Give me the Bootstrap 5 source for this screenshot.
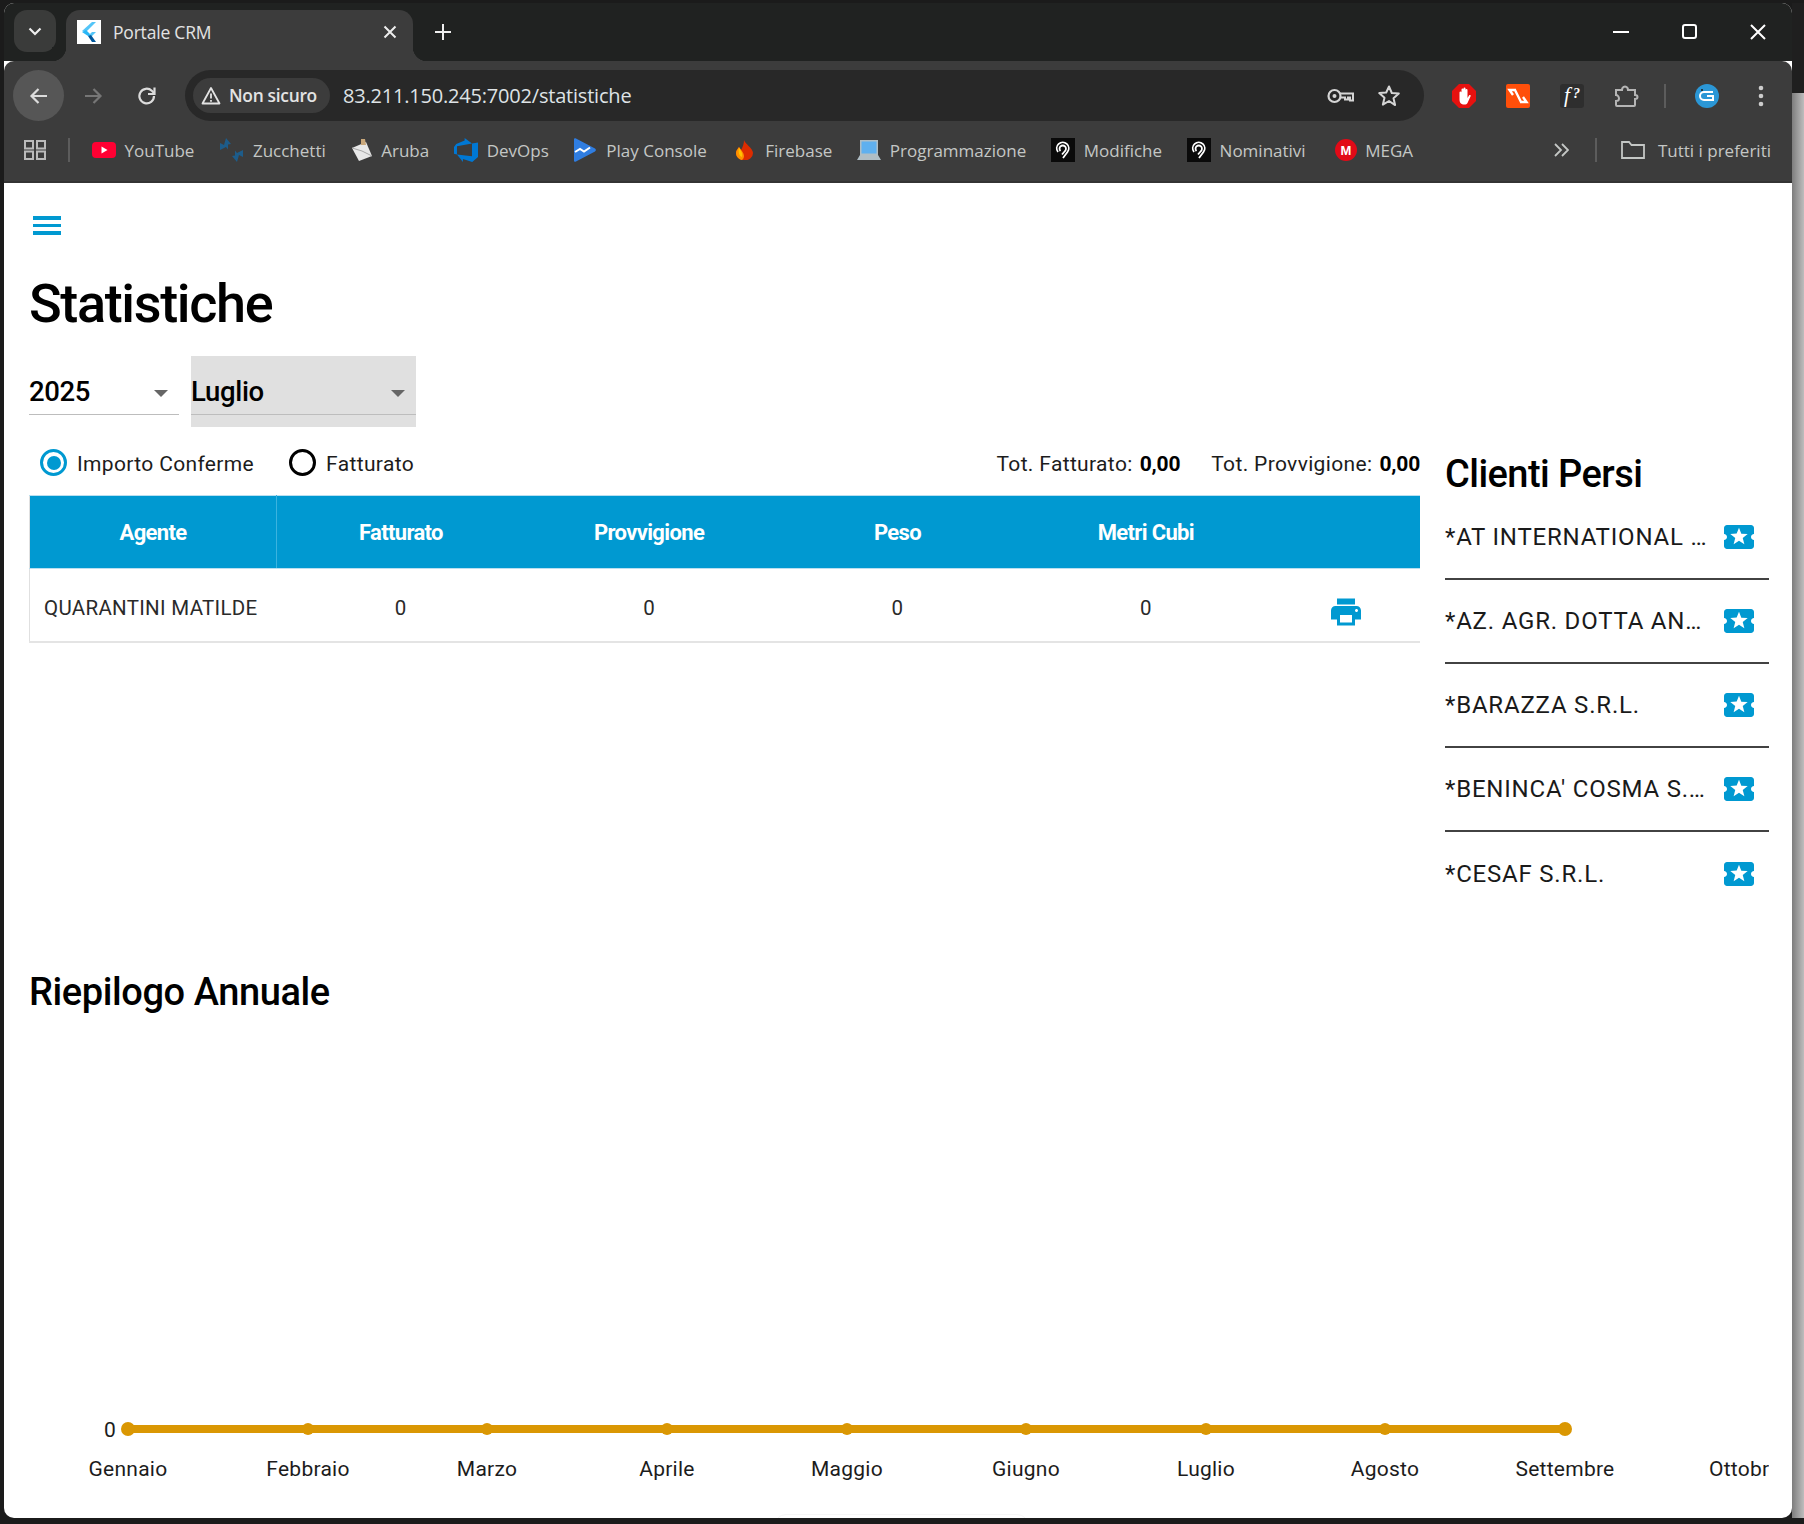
<!DOCTYPE html>
<html lang="it">
<head>
  <meta charset="UTF-8">
  <meta name="viewport" content="width=device-width, initial-scale=1.0">
  <title>Portale CRM</title>
  <link href="https://cdn.jsdelivr.net/npm/bootstrap@5.3.0/dist/css/bootstrap.min.css" rel="stylesheet">
  <style>
    html, body { height: 1524px; overflow: hidden; }
    body { background: #1b1b1b; font-family: Roboto, sans-serif; color: #000; }
    .desk { width: 1804px; height: 1524px; padding: 3px 0 0 4px; }
    .win { width: 1788px; height: 1515px; border-radius: 10px; overflow: hidden; background: #fff; flex: none; }
    .side-strip { width: 12px; height: 1515px; }
    .side-top { height: 90px; background: #1f1f1f; }
    .side-low { height: 1425px; background: linear-gradient(90deg, #7d7d7d, #bdbdbd); }

    /* chrome */
    .titlebar { height: 58px; background: #202221; padding: 7px 0 0 10px; color: #fff; }
    .tab-list { width: 42px; height: 42px; border-radius: 13px; background: #3a3b3a; }
    .tabx { width: 347px; height: 51px; margin-left: 10px; background: #3c3c3c; border-radius: 14px 14px 0 0; padding: 0 16px 7px 11px; }
    .tabx::before, .tabx::after { content: ""; position: absolute; bottom: 0; width: 14px; height: 14px; }
    .tabx::before { left: -14px; background: radial-gradient(circle at 0 0, #202221 14px, #3c3c3c 14.5px); }
    .tabx::after { right: -14px; background: radial-gradient(circle at 100% 0, #202221 14px, #3c3c3c 14.5px); }
    .tab-ico { width: 24px; height: 24px; background: #fff; }
    .tab-name { font: 17.5px "Open Sans", sans-serif; color: #e3e3e3; margin-left: 12px; letter-spacing: -.2px; }
    .tab-plus { margin-left: 22px; margin-bottom: 8px; }
    .win-ctrl { gap: 53px; margin-right: 26px; margin-bottom: 8px; }

    .toolbar { height: 60px; background: #3c3c3c; padding: 9px 0 0 9px; border-radius: 10px 10px 0 0; margin-top: 0; }
    .nav-round { width: 51px; height: 51px; border-radius: 50%; }
    .nav-on { background: #565656; }
    .nav-gap { margin-right: 3px; }
    .omni { width: 1239px; height: 51px; border-radius: 26px; background: #282828; margin-left: 13px; padding: 0 0 0 8px; }
    .not-safe { width: 137px; height: 35px; border-radius: 18px; background: #3c3c3c; padding-left: 8px; color: #e3e3e3; font: 600 17.4px "Open Sans", sans-serif; letter-spacing: -.3px; gap: 8px; }
    .not-safe span { padding-bottom: 2px; }
    .url-txt { margin-left: 13px; font: 20px "Open Sans", sans-serif; color: #dfe3e6; letter-spacing: -.2px; }
    .omni-end { gap: 23px; margin-right: 23px; }
    .ext-row { margin-left: 28px; gap: 30px; }
    .ext-sep { width: 2px; height: 24px; background: #5c5c5c; margin: 0 -1px 0 -5px; }
    .ext-more { margin-left: 9px; }

    .bookbar { height: 62px; background: #3c3c3c; padding: 0 0 2px 20px; border-bottom: 2px solid #333; font: 17px "Open Sans", sans-serif; color: #c4c7c5; }
    .book-sep { width: 2px; height: 24px; background: #5c5c5c; margin: 0 22px; }
    .book-sep-r { margin: 0 24px 0 26px; }
    .book-item { gap: 8.5px; margin-right: 25px; white-space: nowrap; }
    .book-all { gap: 13px; margin-right: 21px; white-space: nowrap; }

    /* page */
    .page { height: 1335px; padding: 0 23px 0 25px; position: relative; }
    .burger { width: 28px; padding-top: 33px; height: 51px; margin-left: 4px; }
    .burger span { display: block; height: 3.5px; background: #0099d1; margin-bottom: 4px; }
    .page-title { font: 500 54px/60px Roboto, sans-serif; letter-spacing: -1.35px; margin: 40px 0 0 0; height: 60px; }
    .pick-row { margin-top: 22px; gap: 12px; }
    .pick { height: 71px; position: relative; font-size: 27.5px; font-weight: 500; letter-spacing: -.35px; }
    .pick-year { width: 150px; }
    .pick-month { width: 225px; background: #e0e0e0; }
    .pick-line { position: absolute; left: 0; right: 0; bottom: 12px; height: 1.5px; background: #bdbdbd; }
    .pick-val { line-height: 71px; height: 70px; display: block; }
    .pick-arrow { position: absolute; right: 11px; top: 34px; width: 0; height: 0; border-left: 7.5px solid transparent; border-right: 7.5px solid transparent; border-top: 7.5px solid #666; }

    .left-col { width: 1391px; }
    .right-col { width: 324px; margin-left: 25px; }
    .radio-row { height: 68px; padding: 22px 0 0 11px; font-size: 21px; letter-spacing: .35px; color: #1c1c1c; }
    .dot-off, .dot-on { width: 27px; height: 27px; border-radius: 50%; border: 3.5px solid #000; display: block; flex: none; }
    .dot-on { border-color: #0099d1; position: relative; }
    .dot-on::after { content: ""; position: absolute; inset: 3.5px; border-radius: 50%; background: #0099d1; }
    .radio-lbl { margin-left: 10px; margin-right: 35px; }
    .totals { margin-left: auto; gap: 31px; }
    .totals b { font-weight: 700; letter-spacing: -.2px; color: #000; margin-left: 1.5px; }

    .stats { width: 1391px; table-layout: fixed; margin: 0; border-left: 1px solid #e0e0e0; }
    .col-agent { width: 247px; }
    .col-act { width: 150px; }
    .stats th { height: 73px; background: #0099d1; color: #fff; font-size: 22px; font-weight: 700; letter-spacing: -.65px; text-align: center; vertical-align: middle; border: 0; border-top: 1px solid #b9dff0; border-bottom: 1px solid #b9dff0; padding: 0; box-shadow: none; }
    .stats td { height: 73px; padding: 7px 0 0; font-size: 20.5px; text-align: center; vertical-align: middle; color: #2a2a2a; border: 0; border-bottom: 2px solid #e4e4e4; letter-spacing: .3px; }
    .stats th:first-child { border-right: 1px solid #3bb3df; }
    .stats td:first-child { text-align: left; padding-left: 14px; }
    .print-ico { display: block; margin: 8px auto 0; position: relative; left: 1px; }

    .lost-title { font: 500 38px/46px Roboto, sans-serif; letter-spacing: -.55px; height: 69px; margin: 0; padding-top: 24px; }
    .lost-item { height: 84px; border-bottom: 2px solid #424242; font-size: 24px; letter-spacing: .8px; color: #1a1a1a; padding-right: 12px; white-space: nowrap; }
    .lost-item:last-child { border-bottom: 0; }

    .year-title { font: 500 38px/44px Roboto, sans-serif; letter-spacing: -.4px; margin: 0; }
    .year-wrap { position: absolute; left: 25px; top: 787px; right: 23px; }
    .chart-box { display: block; margin-top: 0; }
    .chart-box text { font-family: Roboto, sans-serif; font-size: 21px; letter-spacing: .25px; fill: #1c1c1c; }
    .faint-tab { position: absolute; left: 770px; width: 255px; bottom: -12px; height: 16px; border: 1px solid #f6f6f6; border-radius: 12px 12px 0 0; }
  </style>
</head>
<body>
  <div class="desk d-flex">
    <div class="win d-flex flex-column">

      <div class="titlebar d-flex">
        <div class="tab-list d-flex align-items-center justify-content-center">
          <svg width="14" height="9" viewBox="0 0 14 9"><path d="M1.5 1.5 7 7l5.5-5.5" fill="none" stroke="#eee" stroke-width="2.2"/></svg>
        </div>
        <div class="tabx position-relative d-flex align-items-center">
          <span class="tab-ico d-flex align-items-center justify-content-center flex-none">
            <svg width="16" height="20" viewBox="0 0 16 20"><path d="M11 0h4L5 10l-4-1z" fill="#54c5f8"/><path d="M1 10l4-2 6 6h-4z" fill="#29b6f6"/><path d="M8 13l3-3h4l-5 5z" fill="#54c5f8"/><path d="M7 14l3-1 5 7h-4z" fill="#01579b"/></svg>
          </span>
          <span class="tab-name flex-grow-1">Portale CRM</span>
          <svg width="14" height="14" viewBox="0 0 14 14"><path d="M1.5 1.5l11 11m0-11l-11 11" stroke="#eee" stroke-width="2"/></svg>
        </div>
        <div class="tab-plus d-flex align-items-center">
          <svg width="16" height="16" viewBox="0 0 16 16"><path d="M8 0v16M0 8h16" stroke="#eee" stroke-width="2"/></svg>
        </div>
        <div class="win-ctrl d-flex align-items-center ms-auto">
          <svg width="16" height="2" viewBox="0 0 16 2"><path d="M0 1h16" stroke="#fff" stroke-width="2"/></svg>
          <svg width="15" height="15" viewBox="0 0 15 15"><rect x="1" y="1" width="13" height="13" rx="2" fill="none" stroke="#fff" stroke-width="2"/></svg>
          <svg width="16" height="16" viewBox="0 0 16 16"><path d="M1 1l14 14m0-14L1 15" stroke="#fff" stroke-width="2"/></svg>
        </div>
      </div>

      <div class="toolbar d-flex">
        <div class="nav-round nav-on nav-gap d-flex align-items-center justify-content-center">
          <svg width="20" height="20" viewBox="0 0 20 20"><path d="M18 10H3m6.5-7L2.5 10l7 7" fill="none" stroke="#dcdcdc" stroke-width="2.2"/></svg>
        </div>
        <div class="nav-round nav-gap d-flex align-items-center justify-content-center">
          <svg width="20" height="20" viewBox="0 0 20 20"><path d="M2 10h15m-6.500-7l7 7-7 7" fill="none" stroke="#767676" stroke-width="2.200"/></svg>
        </div>
        <div class="nav-round d-flex align-items-center justify-content-center">
          <svg width="22" height="22" viewBox="0 0 22 22"><path d="M18 11a7.300 7.300 0 1 1-2.200-5.200L18 8" fill="none" stroke="#dcdcdc" stroke-width="2.200"/><path d="M18.500 2.500V9H12" fill="none" stroke="#dcdcdc" stroke-width="2.200"/></svg>
        </div>
        <div class="omni d-flex align-items-center">
          <div class="not-safe d-flex align-items-center">
            <svg width="20" height="19" viewBox="0 0 20 19"><path d="M10 2 18.500 17.500h-17z" fill="none" stroke="#e3e3e3" stroke-width="1.800" stroke-linejoin="round"/><path d="M10 7.500v5M10 14v1.800" stroke="#e3e3e3" stroke-width="1.800"/></svg>
            <span>Non sicuro</span>
          </div>
          <span class="url-txt">83.211.150.245:7002/statistiche</span>
          <div class="omni-end d-flex align-items-center ms-auto">
            <svg width="27" height="16" viewBox="0 0 27 16"><circle cx="7.500" cy="8" r="6" fill="none" stroke="#d5d5d5" stroke-width="2.200"/><circle cx="7.500" cy="8" r="2" fill="#d5d5d5"/><path d="M13 5.500h13v7h-3v-3h-2v2h-3v-2h-5" fill="none" stroke="#d5d5d5" stroke-width="2"/></svg>
            <svg width="24" height="24" viewBox="0 0 24 24"><path d="M12 2.500l2.800 6.500 7 .6-5.300 4.600 1.600 6.900L12 17l-6.100 3.600 1.600-6.900-5.300-4.600 7-.6z" fill="none" stroke="#d5d5d5" stroke-width="2" stroke-linejoin="round"/></svg>
          </div>
        </div>
        <div class="ext-row d-flex align-items-center">
          <svg width="24" height="24" viewBox="0 0 24 24"><path d="M7 0h10l7 7v10l-7 7H7l-7-7V7z" fill="#e6110f"/><path d="M7.500 13V8.500a1 1 0 0 1 2 0V12V5.500a1 1 0 0 1 2 0V11.500V4.500a1 1 0 0 1 2 0v7V6a1 1 0 0 1 2 0v8l1.500-2.500c.8-1 2.200-.2 1.600.8L15.500 19c-.7 1-1.500 1.500-3 1.500-3.500 0-5-2-5-5z" fill="#fff"/></svg>
          <svg width="24" height="24" viewBox="0 0 24 24"><rect width="24" height="24" rx="2" fill="#ff4f0a"/><path d="M10 6H3.500l3.500 5M14 18h6.500L17 13M9 6l6 12" fill="none" stroke="#fff" stroke-width="2.400"/></svg>
          <svg width="24" height="24" viewBox="0 0 24 24"><rect width="24" height="24" rx="3" fill="#2e2e2e"/><text x="4" y="18" fill="#fff" font-family="Liberation Serif, serif" font-style="italic" font-size="21">f</text><text x="13" y="14" fill="#fff" font-family="Liberation Serif, serif" font-style="italic" font-weight="700" font-size="14">?</text></svg>
          <svg width="25" height="24" viewBox="0 0 25 24"><path d="M2 6h6c0-1.500 1-3.500 3-3.500S14 4.500 14 6h7v5c1.500 0 2.500.8 2.500 2s-1 2-2.500 2v6a1 1 0 0 1-1 1H3a1 1 0 0 1-1-1v-4c1.500 0 3-.8 3-2.500S3.500 11 2 11z" fill="none" stroke="#b5b5b5" stroke-width="2"/></svg>
          <span class="ext-sep"></span>
          <svg width="24" height="24" viewBox="0 0 24 24"><circle cx="12" cy="12" r="12" fill="#2b97d6"/><path d="M18 8H9a3.500 3.500 0 0 0 0 8h9v-4h-6" fill="none" stroke="#fff" stroke-width="2"/><circle cx="7" cy="6" r="1" fill="#1a1a1a"/></svg>
          <svg class="ext-more" width="6" height="22" viewBox="0 0 6 22"><circle cx="3" cy="3" r="2.300" fill="#ccc"/><circle cx="3" cy="11" r="2.300" fill="#ccc"/><circle cx="3" cy="19" r="2.300" fill="#ccc"/></svg>
        </div>
      </div>

      <div class="bookbar d-flex align-items-center">
        <svg width="22" height="20" viewBox="0 0 22 20"><path d="M1 1h8v7.500H1zM13 1h8v7.500h-8zM1 11.500h8V19H1zM13 11.500h8V19h-8z" fill="none" stroke="#bbb" stroke-width="2"/></svg>
        <span class="book-sep"></span>
        <div class="book-item d-flex align-items-center">
          <svg width="24" height="16" viewBox="0 0 24 16"><rect width="24" height="16" rx="4" fill="#ff0033"/><path d="M9.500 4.500l6 3.500-6 3.500z" fill="#fff"/></svg><span>YouTube</span>
        </div>
        <div class="book-item d-flex align-items-center">
          <svg width="25" height="24" viewBox="0 0 25 24"><path d="M7 0l5 6-3 .5v5L7 9l-6 3V5l4 2z" fill="#1d5c8a"/><path d="M18 24l-5-6 3-.5v-5l2 2.500 6-3v7l-4-2z" fill="#1d5c8a"/></svg><span>Zucchetti</span>
        </div>
        <div class="book-item d-flex align-items-center">
          <svg width="22" height="24" viewBox="0 0 22 24"><path d="M1 10l14-6 6 14-13 5z" fill="#e8e8e8"/><path d="M1 10l10 3 10 5" fill="none" stroke="#a8a8a8"/><path d="M10 1h4l1 6h-5z" fill="#c9a77a"/></svg><span>Aruba</span>
        </div>
        <div class="book-item d-flex align-items-center">
          <svg width="24" height="24" viewBox="0 0 24 24"><path d="M0 8.877L2.247 5.910l8.405-3.416V.022l7.370 5.393L2.966 8.338v8.225L0 15.707zm24-4.450v14.651l-5.753 4.900-9.303-3.057v3.056l-5.978-7.416 15.057 1.798V5.415z" fill="#0078d4"/></svg><span>DevOps</span>
        </div>
        <div class="book-item d-flex align-items-center">
          <svg width="24" height="24" viewBox="0 0 24 24" preserveAspectRatio="xMinYMid"><path d="M0 1.500C0 .3 1 0 2 .5l19 10c1.200.6 1.200 2.400 0 3l-19 10c-1 .5-2 .2-2-1z" fill="#2f7de1"/><path d="M1 14l5-3 4 2.500 6-4" fill="none" stroke="#fff" stroke-width="2"/></svg><span>Play Console</span>
        </div>
        <div class="book-item d-flex align-items-center">
          <svg width="25" height="20" viewBox="-4 0 25 20"><path d="M8 0c1 4 9 8 9 13a8 7 0 0 1-17 0C0 10 2 9 3 7l2 3c2-3 3-7 3-10z" fill="#dd2c00"/><path d="M0 13c0-3 2-4 3-6 2 3 5 6 5 9 0 2-1 3-2 4-3-.5-6-3-6-7z" fill="#ff9100"/><path d="M3 8c2 3 4 5 3 9-3-.5-4-6-3-9z" fill="#ffc400"/></svg><span>Firebase</span>
        </div>
        <div class="book-item d-flex align-items-center">
          <svg width="24" height="22" viewBox="0 0 24 22"><rect x="3" y="1" width="18" height="15" fill="#b0bec5"/><rect x="4.500" y="2.500" width="15" height="12" fill="#5fb0ef"/><path d="M3 16h18l3 5H0z" fill="#b0bec5"/></svg><span>Programmazione</span>
        </div>
        <div class="book-item d-flex align-items-center">
          <svg width="24" height="24" viewBox="0 0 24 24"><rect width="24" height="24" fill="#0a0a0a"/><path d="M7 14a6 6 0 1 1 9.500 0L12 20M9.500 13a3.200 3.200 0 1 1 4.500 0l-3 3.500" fill="none" stroke="#fff" stroke-width="1.800"/></svg><span>Modifiche</span>
        </div>
        <div class="book-item d-flex align-items-center">
          <svg width="24" height="24" viewBox="0 0 24 24"><rect width="24" height="24" fill="#0a0a0a"/><path d="M7 14a6 6 0 1 1 9.500 0L12 20M9.500 13a3.200 3.200 0 1 1 4.500 0l-3 3.500" fill="none" stroke="#fff" stroke-width="1.800"/></svg><span>Nominativi</span>
        </div>
        <div class="book-item d-flex align-items-center ms-1">
          <svg width="22" height="22" viewBox="0 0 22 22"><circle cx="11" cy="11" r="11" fill="#e20a17"/><text x="11" y="16" text-anchor="middle" fill="#fff" font-family="Liberation Sans, sans-serif" font-weight="700" font-size="13">M</text></svg><span>MEGA</span>
        </div>
        <svg class="ms-auto" width="15" height="14" viewBox="0 0 15 14"><path d="M1 1l6 6-6 6M8 1l6 6-6 6" fill="none" stroke="#c4c7c5" stroke-width="1.800"/></svg>
        <span class="book-sep book-sep-r"></span>
        <div class="book-all d-flex align-items-center">
          <svg width="24" height="18" viewBox="0 0 24 18"><path d="M1 1h7l2.500 3H23v13H1z" fill="none" stroke="#c4c7c5" stroke-width="1.800"/></svg><span>Tutti i preferiti</span>
        </div>
      </div>

      <div class="page">
        <div class="burger"><span></span><span></span><span></span></div>
        <h1 class="page-title">Statistiche</h1>
        <div class="pick-row d-flex">
          <div class="pick pick-year"><span class="pick-val">2025</span><i class="pick-arrow"></i><i class="pick-line"></i></div>
          <div class="pick pick-month"><span class="pick-val">Luglio</span><i class="pick-arrow"></i><i class="pick-line"></i></div>
        </div>
        <div class="d-flex">
          <div class="left-col">
            <div class="radio-row d-flex align-items-start">
              <span class="dot-on"></span><span class="radio-lbl">Importo Conferme</span>
              <span class="dot-off"></span><span class="radio-lbl">Fatturato</span>
              <div class="totals d-flex">
                <span>Tot. Fatturato: <b>0,00</b></span>
                <span>Tot. Provvigione: <b>0,00</b></span>
              </div>
            </div>
            <table class="table stats">
              <colgroup><col class="col-agent"><col><col><col><col><col class="col-act"></colgroup>
              <thead>
                <tr><th>Agente</th><th>Fatturato</th><th>Provvigione</th><th>Peso</th><th>Metri Cubi</th><th></th></tr>
              </thead>
              <tbody>
                <tr>
                  <td>QUARANTINI MATILDE</td><td>0</td><td>0</td><td>0</td><td>0</td>
                  <td><svg class="print-ico" width="36" height="36" viewBox="0 0 24 24"><path fill="#0099d1" d="M19 8H5c-1.660 0-3 1.340-3 3v6h4v4h12v-4h4v-6c0-1.660-1.340-3-3-3zm-3 11H8v-5h8v5zm3-7c-.55 0-1-.45-1-1s.45-1 1-1 1 .45 1 1-.45 1-1 1zm-1-9H6v4h12V3z"/></svg></td>
                </tr>
              </tbody>
            </table>
          </div>
          <div class="right-col">
            <h2 class="lost-title">Clienti Persi</h2>
            <div>
              <div class="lost-item d-flex align-items-center justify-content-between"><span>*AT INTERNATIONAL …</span><svg width="36" height="36" viewBox="0 0 24 24"><path fill="#0099d1" d="M20 12c0-1.100.9-2 2-2V6c0-1.100-.9-2-2-2H4c-1.100 0-1.990.9-1.990 2v4c1.100 0 1.990.9 1.990 2s-.89 2-2 2v4c0 1.100.9 2 2 2h16c1.100 0 2-.9 2-2v-4c-1.100 0-2-.9-2-2zm-4.420 4.800L12 14.500l-3.580 2.300 1.080-4.120-3.290-2.690 4.240-.25L12 5.800l1.540 3.950 4.240.25-3.290 2.690 1.090 4.110z"/></svg></div>
              <div class="lost-item d-flex align-items-center justify-content-between"><span>*AZ. AGR. DOTTA AN…</span><svg width="36" height="36" viewBox="0 0 24 24"><path fill="#0099d1" d="M20 12c0-1.100.9-2 2-2V6c0-1.100-.9-2-2-2H4c-1.100 0-1.990.9-1.990 2v4c1.100 0 1.990.9 1.990 2s-.89 2-2 2v4c0 1.100.9 2 2 2h16c1.100 0 2-.9 2-2v-4c-1.100 0-2-.9-2-2zm-4.420 4.800L12 14.500l-3.580 2.300 1.080-4.120-3.290-2.690 4.240-.25L12 5.800l1.540 3.950 4.240.25-3.290 2.690 1.090 4.110z"/></svg></div>
              <div class="lost-item d-flex align-items-center justify-content-between"><span>*BARAZZA S.R.L.</span><svg width="36" height="36" viewBox="0 0 24 24"><path fill="#0099d1" d="M20 12c0-1.100.9-2 2-2V6c0-1.100-.9-2-2-2H4c-1.100 0-1.990.9-1.990 2v4c1.100 0 1.990.9 1.990 2s-.89 2-2 2v4c0 1.100.9 2 2 2h16c1.100 0 2-.9 2-2v-4c-1.100 0-2-.9-2-2zm-4.420 4.800L12 14.500l-3.580 2.300 1.080-4.120-3.290-2.690 4.240-.25L12 5.800l1.540 3.950 4.240.25-3.290 2.690 1.090 4.110z"/></svg></div>
              <div class="lost-item d-flex align-items-center justify-content-between"><span>*BENINCA' COSMA S.…</span><svg width="36" height="36" viewBox="0 0 24 24"><path fill="#0099d1" d="M20 12c0-1.100.9-2 2-2V6c0-1.100-.9-2-2-2H4c-1.100 0-1.990.9-1.990 2v4c1.100 0 1.990.9 1.990 2s-.89 2-2 2v4c0 1.100.9 2 2 2h16c1.100 0 2-.9 2-2v-4c-1.100 0-2-.9-2-2zm-4.420 4.800L12 14.500l-3.580 2.300 1.080-4.120-3.290-2.690 4.240-.25L12 5.800l1.540 3.950 4.240.25-3.290 2.690 1.090 4.110z"/></svg></div>
              <div class="lost-item d-flex align-items-center justify-content-between"><span>*CESAF S.R.L.</span><svg width="36" height="36" viewBox="0 0 24 24"><path fill="#0099d1" d="M20 12c0-1.100.9-2 2-2V6c0-1.100-.9-2-2-2H4c-1.100 0-1.990.9-1.990 2v4c1.100 0 1.990.9 1.990 2s-.89 2-2 2v4c0 1.100.9 2 2 2h16c1.100 0 2-.9 2-2v-4c-1.100 0-2-.9-2-2zm-4.420 4.800L12 14.500l-3.580 2.300 1.080-4.120-3.290-2.690 4.240-.25L12 5.800l1.540 3.950 4.240.25-3.290 2.690 1.090 4.110z"/></svg></div>
            </div>
          </div>
        </div>

        <div class="year-wrap">
          <h2 class="year-title">Riepilogo Annuale</h2>
          <svg class="chart-box" width="1740" height="500" viewBox="0 0 1740 500">
            <g transform="translate(-29 -1014)">
              <path d="M128 1429H1565" stroke="#da9703" stroke-width="8"/>
              <circle cx="128" cy="1429" r="7" fill="#da9703"/><circle cx="308" cy="1429" r="6" fill="#da9703"/><circle cx="487" cy="1429" r="6" fill="#da9703"/><circle cx="667" cy="1429" r="6" fill="#da9703"/><circle cx="847" cy="1429" r="6" fill="#da9703"/><circle cx="1026" cy="1429" r="6" fill="#da9703"/><circle cx="1206" cy="1429" r="6" fill="#da9703"/><circle cx="1385" cy="1429" r="6" fill="#da9703"/><circle cx="1565" cy="1429" r="7" fill="#da9703"/>
              <text x="110" y="1437" text-anchor="middle">0</text>
              <text x="128" y="1476" text-anchor="middle">Gennaio</text>
              <text x="308" y="1476" text-anchor="middle">Febbraio</text>
              <text x="487" y="1476" text-anchor="middle">Marzo</text>
              <text x="667" y="1476" text-anchor="middle">Aprile</text>
              <text x="847" y="1476" text-anchor="middle">Maggio</text>
              <text x="1026" y="1476" text-anchor="middle">Giugno</text>
              <text x="1206" y="1476" text-anchor="middle">Luglio</text>
              <text x="1385" y="1476" text-anchor="middle">Agosto</text>
              <text x="1565" y="1476" text-anchor="middle">Settembre</text>
              <text x="1709" y="1476">Ottobr</text>
            </g>
          </svg>
        </div>
        <div class="faint-tab"></div>
      </div>
    </div>
    <div class="side-strip">
      <div class="side-top"></div>
      <div class="side-low"></div>
    </div>
  </div>
  <script src="https://cdn.jsdelivr.net/npm/bootstrap@5.3.0/dist/js/bootstrap.bundle.min.js"></script>
</body>
</html>
